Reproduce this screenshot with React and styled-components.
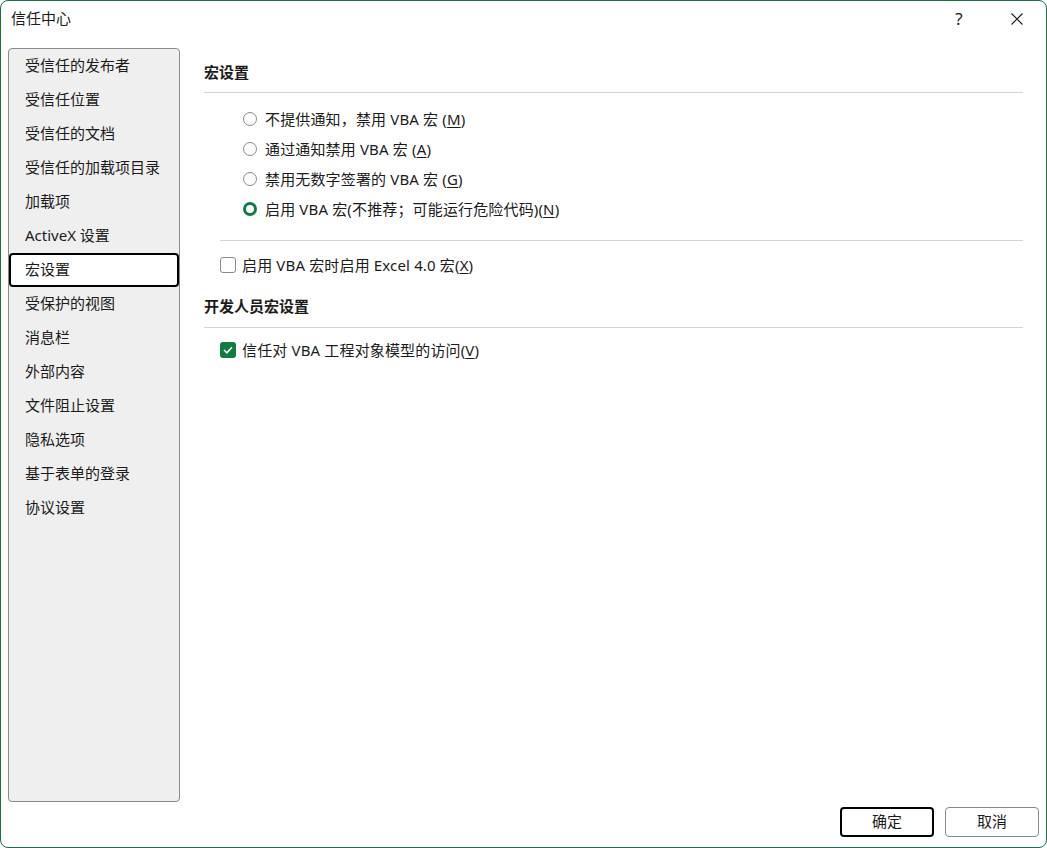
import React from "react";
import styled, { createGlobalStyle } from "styled-components";

const Global = createGlobalStyle`
  html, body { margin: 0; padding: 0; background: #ffffff; }
  * { box-sizing: border-box; }
  body {
    font-family: "Noto Sans", "Noto Sans CJK SC", sans-serif;
    color: #1b1b1b;
  }
`;

const Window = styled.div`
  width: 1047px;
  height: 848px;
  border: 1px solid #1d6f42;
  border-radius: 8px;
  background: #fff;
  display: flex;
  flex-direction: column;
  overflow: hidden;
`;

const TitleBar = styled.div`
  height: 47px;
  display: flex;
  align-items: flex-start;
  padding: 7px 0 0 10px;
  font-size: 15px;
  line-height: 20px;
`;

const Title = styled.div`
  flex: 1;
`;

const TitleButton = styled.div`
  width: 58px;
  height: 22px;
  display: flex;
  align-items: center;
  justify-content: center;
  font-size: 17px;
  color: #1b1b1b;
`;

const Main = styled.div`
  flex: 1;
  display: flex;
  padding: 0 7px 10px 7px;
  min-height: 0;
`;

const Nav = styled.div`
  width: 172px;
  height: 754px;
  flex-shrink: 0;
  background: #efefef;
  border: 1px solid #8a8a8a;
  border-radius: 4px;
  display: flex;
  flex-direction: column;
`;

const NavItem = styled.div`
  height: 34px;
  display: flex;
  align-items: center;
  padding: 0 0 3px 14px;
  font-size: 15px;
  border: 2px solid ${(p) => (p.$active ? "#000" : "transparent")};
  border-radius: 4px;
  background: ${(p) => (p.$active ? "#fff" : "transparent")};
`;

const Right = styled.div`
  flex: 1;
  display: flex;
  flex-direction: column;
  padding-left: 24px;
`;

const Content = styled.div`
  padding-top: 14px;
  margin-right: 16px;
  display: flex;
  flex-direction: column;
`;

const Heading = styled.div`
  font-size: 15px;
  font-weight: 700;
  line-height: 20px;
`;

const Rule = styled.div`
  height: 1px;
  background: #d4d4d4;
  margin-top: ${(p) => p.$top}px;
  margin-left: ${(p) => p.$indent || 0}px;
`;

const RadioGroup = styled.div`
  padding-left: 39px;
  margin-top: 11px;
  display: flex;
  flex-direction: column;
`;

const OptionRow = styled.div`
  height: 30px;
  display: flex;
  align-items: center;
  gap: ${(p) => p.$gap || 8}px;
  font-size: 15px;
  margin-left: ${(p) => p.$indent || 0}px;
  margin-top: ${(p) => p.$top || 0}px;
`;

const Label = styled.span`
  letter-spacing: 0.15px;
  padding-bottom: 1px;
`;

const RadioCircle = styled.span`
  width: 14px;
  height: 14px;
  border-radius: 50%;
  flex-shrink: 0;
  border: ${(p) => (p.$checked ? "3.5px solid #107c41" : "1px solid #8a8a8a")};
  background: #fff;
`;

const Box = styled.span`
  width: 16px;
  height: 16px;
  border-radius: 3px;
  flex-shrink: 0;
  border: ${(p) => (p.$checked ? "none" : "1px solid #8a8a8a")};
  background: ${(p) => (p.$checked ? "#107c41" : "#fff")};
  display: flex;
  align-items: center;
  justify-content: center;
`;

const U = styled.span`
  text-decoration: underline;
  text-underline-offset: 2px;
`;

const Footer = styled.div`
  margin-top: auto;
  display: flex;
  justify-content: flex-end;
  gap: 11px;
`;

const Button = styled.div`
  width: 94px;
  height: 30px;
  display: flex;
  align-items: center;
  justify-content: center;
  padding-bottom: 3px;
  font-size: 15px;
  border-radius: 4px;
  border: ${(p) => (p.$primary ? "2px solid #000" : "1px solid #8a8a8a")};
  background: #fff;
`;

const navItems = [
  "受信任的发布者",
  "受信任位置",
  "受信任的文档",
  "受信任的加载项目录",
  "加载项",
  "ActiveX 设置",
  "宏设置",
  "受保护的视图",
  "消息栏",
  "外部内容",
  "文件阻止设置",
  "隐私选项",
  "基于表单的登录",
  "协议设置",
];

const radios = [
  { pre: "不提供通知，禁用 VBA 宏 (", key: "M", post: ")" },
  { pre: "通过通知禁用 VBA 宏 (", key: "A", post: ")" },
  { pre: "禁用无数字签署的 VBA 宏 (", key: "G", post: ")" },
  { pre: "启用 VBA 宏(不推荐；可能运行危险代码)(", key: "N", post: ")", checked: true },
];

export default function App() {
  return (
    <>
      <Global />
      <Window>
        <TitleBar>
          <Title>信任中心</Title>
          <TitleButton>?</TitleButton>
          <TitleButton>
            <svg width="12" height="12" viewBox="0 0 12 12">
              <path d="M0.5 0.5 L11.5 11.5 M11.5 0.5 L0.5 11.5" stroke="#1b1b1b" strokeWidth="1.1" fill="none" />
            </svg>
          </TitleButton>
        </TitleBar>
        <Main>
          <Nav>
            {navItems.map((t) => (
              <NavItem key={t} $active={t === "宏设置"}>
                {t}
              </NavItem>
            ))}
          </Nav>
          <Right>
            <Content>
              <Heading>宏设置</Heading>
              <Rule $top={10} />
              <RadioGroup>
                {radios.map((r) => (
                  <OptionRow key={r.key}>
                    <RadioCircle $checked={r.checked} />
                    <Label>
                      {r.pre}
                      <U>{r.key}</U>
                      {r.post}
                    </Label>
                  </OptionRow>
                ))}
              </RadioGroup>
              <Rule $top={16} $indent={16} />
              <OptionRow $indent={16} $top={9} $gap={6}>
                <Box />
                <Label>
                  启用 VBA 宏时启用 Excel 4.0 宏(<U>X</U>)
                </Label>
              </OptionRow>
              <Heading style={{ marginTop: 16 }}>开发人员宏设置</Heading>
              <Rule $top={11} />
              <OptionRow $indent={16} $top={7} $gap={6}>
                <Box $checked>
                  <svg width="10" height="8" viewBox="0 0 10 8">
                    <path d="M1 4 L3.8 6.8 L9 1.2" stroke="#fff" strokeWidth="1.6" fill="none" />
                  </svg>
                </Box>
                <Label>
                  信任对 VBA 工程对象模型的访问(<U>V</U>)
                </Label>
              </OptionRow>
            </Content>
            <Footer>
              <Button $primary>确定</Button>
              <Button>取消</Button>
            </Footer>
          </Right>
        </Main>
      </Window>
    </>
  );
}
